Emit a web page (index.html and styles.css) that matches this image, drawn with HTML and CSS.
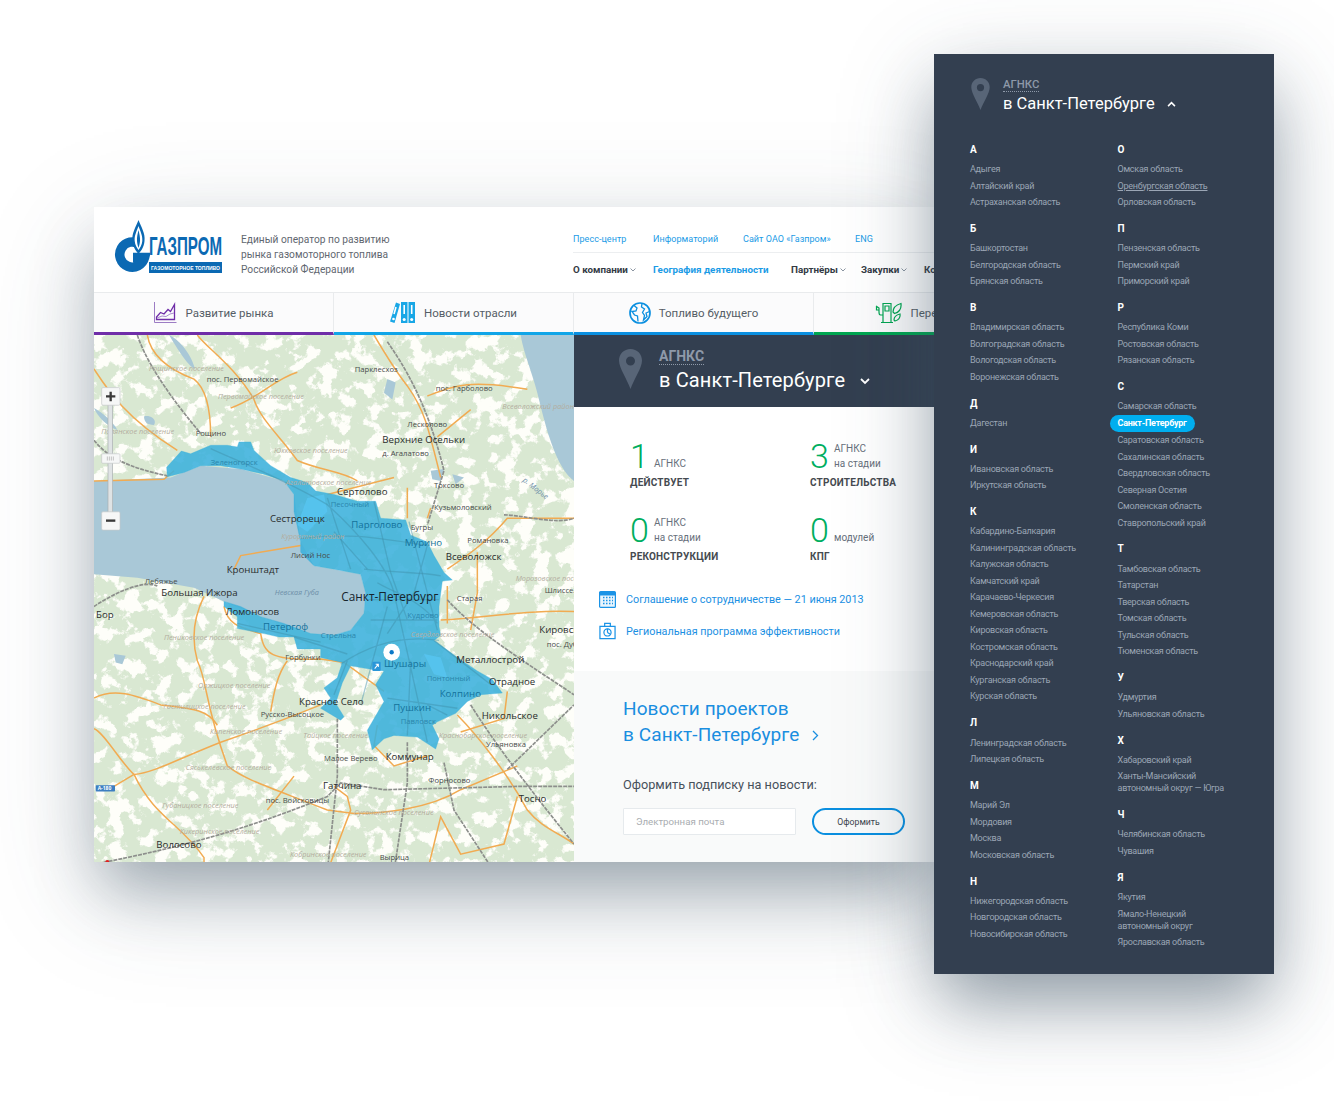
FILE: index.html
```html
<!DOCTYPE html>
<html lang="ru">
<head>
<meta charset="utf-8">
<title>АГНКС в Санкт-Петербурге</title>
<link rel="stylesheet" href="styles.css">
</head>
<body>
<div class="stage">
  <main class="card">
    <header class="site-head">
      <a class="logo" href="#">
        <svg width="110" height="56" viewBox="0 0 110 56">
          <path d="M26 25.5A12.6 12.6 0 1 0 30.6 38.500H19" fill="none" stroke="#0b69b3" stroke-width="9.500"/>
          <path d="M24.500 1C27 8 31.500 14 30.500 22C30 28 27 32 24.500 35C22 32 19 28 18.500 22C17.500 14 22 8 24.500 1Z" fill="#0b69b3"/>
          <path d="M24.500 7C26 12 28.800 16 28.300 22C28 26 26 29 24.500 31C23 29 21 26 20.700 22C20.200 16 23 12 24.500 7Z" fill="#fff"/>
          <path d="M24.500 11C25.300 15 26.300 18 26 22C25.800 25 25 27 24.500 29C24 27 23.200 25 23 22C22.700 18 23.700 15 24.500 11Z" fill="#0b69b3"/>
          <text class="logo-name" x="35" y="36" textLength="73" lengthAdjust="spacingAndGlyphs">ГАЗПРОМ</text>
          <rect x="35" y="43" width="73" height="11" fill="#0b69b3"/>
          <text class="logo-sub" x="37" y="51" textLength="69" lengthAdjust="spacingAndGlyphs">ГАЗОМОТОРНОЕ ТОПЛИВО</text>
        </svg>
      </a>
      <p class="tagline">Единый оператор по развитию<br>рынка газомоторного топлива<br>Российской Федерации</p>
      <nav class="site-nav">
        <ul class="nav-top">
          <li class="w80"><a href="#">Пресс-центр</a></li>
          <li class="w90"><a href="#">Информаторий</a></li>
          <li class="w112"><a href="#">Сайт ОАО «Газпром»</a></li>
          <li><a href="#">ENG</a></li>
        </ul>
        <ul class="nav-main">
          <li class="w80">О компании<svg class="caret" width="6" height="4" viewBox="0 0 6 4"><path d="M.5.5 3 3 5.500.5" fill="none" stroke="#8b95a1"/></svg></li>
          <li class="w138 active">География деятельности</li>
          <li class="w70">Партнёры<svg class="caret" width="6" height="4" viewBox="0 0 6 4"><path d="M.5.5 3 3 5.500.5" fill="none" stroke="#8b95a1"/></svg></li>
          <li class="w63">Закупки<svg class="caret" width="6" height="4" viewBox="0 0 6 4"><path d="M.5.5 3 3 5.500.5" fill="none" stroke="#8b95a1"/></svg></li>
          <li>Контакты</li>
        </ul>
      </nav>
    </header>

    <div class="tabs">
      <a class="tab tab-purple" href="#">
        <svg width="24" height="23" viewBox="0 0 24 23" fill="none" stroke="#6f2da8">
          <path d="M1.500 1V21.500H23.500" stroke="#9c7cc4"/>
          <path d="M3.500 18.500V16L7.500 11.500 11 13 15 8.500 17.500 10.500 21.500 3.500V18.500Z" stroke-width="1.300"/>
          <path d="M4 17 9 15 13 15.500 17 13 21 12" stroke="#a98ad0"/>
        </svg>
        <span>Развитие рынка</span>
      </a>
      <a class="tab tab-sky" href="#">
        <svg width="26" height="23" viewBox="0 0 26 23">
          <path d="M6 1.500 10 3 4.500 22 0 20.500Z" fill="#19a7e6"/>
          <rect x="11" y="1" width="6.500" height="21" fill="#19a7e6"/>
          <rect x="18.500" y="1" width="6.500" height="21" fill="#19a7e6"/>
          <path d="M6 6 4 13M14.200 4V13M21.700 4V13" stroke="#fff" stroke-width="1.600"/>
          <circle cx="3.500" cy="18" r="1.300" fill="#fff"/><circle cx="14.200" cy="18.500" r="1.500" fill="#fff"/><circle cx="21.700" cy="18.500" r="1.500" fill="#fff"/>
        </svg>
        <span>Новости отрасли</span>
      </a>
      <a class="tab tab-blue" href="#">
        <svg width="22" height="22" viewBox="0 0 22 22" fill="none" stroke="#0a8fe0" stroke-width="1.300">
          <circle cx="11" cy="11" r="10" stroke-width="1.700"/>
          <path d="M5 3.500 8 6 7 9 3 9.500 5.500 13 8.500 14 9 19.500M13 1.500 12.500 5 15.500 7 13.500 10.500 15.500 13.500 14.500 18 18 14.500 17 11 20.500 9.500"/>
        </svg>
        <span>Топливо будущего</span>
      </a>
      <a class="tab tab-green" href="#">
        <svg width="27" height="21" viewBox="0 0 27 21" fill="none" stroke="#00a651" stroke-width="1.200">
          <path d="M8 20.500V1.500H16V20.500M6 20.500H18M10 4H14V9H10Z"/>
          <path d="M8 13H5.500C4 13 4 11 4 10V6L1 4M4 8H1.500V5"/>
          <path d="M18 10C18 6 21 3 26 1.500C26.500 6 25 10 19.500 11.500ZM19 18C19 15 21 13 25 12C25.500 15.500 24 18 20 19Z"/>
        </svg>
        <span>Переход на газ</span>
      </a>
    </div>

    <div class="body-row">
      <figure class="map">
        <svg width="480" height="527" viewBox="0 0 1440 1553" preserveAspectRatio="none">
          <defs>
            <filter id="patches" x="0" y="0" width="100%" height="100%">
              <feTurbulence type="fractalNoise" baseFrequency="0.022" numOctaves="6" seed="11"/>
              <feColorMatrix type="matrix" values="0 0 0 0 .99  0 0 0 0 .99  0 0 0 0 .95  12 0 0 0 -6.200"/>
            </filter>
          </defs>
          <rect class="land" width="1440" height="1581"/>
          <rect class="clearings" width="1440" height="1581" filter="url(#patches)"/>
          <path class="water" d="M1280 0H1440V430C1400 400 1370 330 1340 210 1320 120 1290 60 1280 0ZM225 0C250 10 290 50 303 100 280 90 250 40 225 0ZM0 215C30 230 60 260 70 280 40 270 10 240 0 215ZM150 240C170 235 190 250 180 265 160 265 150 255 150 240ZM880 130 905 140 895 190 870 170ZM1010 400 1050 395 1040 430 1015 425ZM1075 410 1110 420 1085 440ZM60 940 95 945 85 970 65 965Z"/>
          <path class="water" d="M0 430 230 420 320 385 440 395 570 430 600 470 620 610 660 680 800 705 815 760 810 820 770 870 720 885 650 880 500 830 390 785 300 745 130 715 0 705Z"/>
          <g class="roads">
            <path d="M160 0C170 60 220 100 300 130 340 160 350 230 350 300"/>
            <path d="M310 0C340 40 420 90 480 190 500 250 560 300 610 370 680 400 740 400 790 430"/>
            <path d="M610 110C540 130 490 190 410 215"/>
            <path d="M840 0C870 50 900 100 940 150 990 220 1000 260 1040 420"/>
            <path d="M1000 180C1080 150 1120 130 1300 160"/>
            <path d="M1130 220 1030 300"/>
            <path d="M0 430 210 425 240 400"/>
            <path d="M420 690 440 650 620 620"/>
            <path d="M940 450V540M1010 510 1000 540"/>
            <path d="M1060 690C1120 650 1180 610 1240 540H1440"/>
            <path d="M1150 640V760L1130 870"/>
            <path d="M1040 840C1200 830 1300 810 1440 815M1060 740V850"/>
            <path d="M390 800C400 850 430 860 500 880 510 940 530 960 680 955L750 965 870 1050"/>
            <path d="M330 770C300 830 290 890 310 960 340 1020 330 1080 400 1270 450 1310 520 1330 700 1400L780 1410C860 1410 1000 1400 1100 1340L1270 1270"/>
            <path d="M0 1070C60 1040 120 1060 200 1090 280 1100 340 1100 370 1150"/>
            <path d="M120 1295C180 1290 250 1250 380 1200 500 1160 580 1130 680 1090"/>
            <path d="M0 1160C30 1170 80 1260 120 1295 180 1420 260 1440 330 1540V1581"/>
            <path d="M60 1330 120 1295"/>
            <path d="M1090 1120C1150 1180 1240 1290 1300 1400 1340 1450 1400 1470 1440 1500"/>
            <path d="M1270 1360 1230 1500 1100 1530 1040 1420 1000 1581"/>
            <path d="M530 1110C540 1050 550 1000 580 960"/>
            <path d="M720 1330 760 1360 770 1400 700 1581"/>
            <path d="M850 1150 840 1210 900 1270 1000 1240"/>
            <path d="M0 100C40 160 90 240 250 340M900 420 700 470M1240 1050 1230 1130 1100 1170M600 1300 520 1400"/>
          </g>
          <g class="rails">
            <path d="M130 0C150 60 200 150 320 290"/>
            <path d="M0 310C40 360 100 390 220 415"/>
            <path d="M880 20C930 90 1000 200 1050 400L1000 560"/>
            <path d="M0 800C60 760 150 720 190 740"/>
            <path d="M1060 780C1130 860 1270 950 1440 1060"/>
            <path d="M1240 1280 1440 1090"/>
            <path d="M1130 1090C1200 1200 1300 1330 1440 1500"/>
            <path d="M0 1560C200 1520 400 1480 700 1360L740 1320 870 1340 1280 1330H1440"/>
            <path d="M940 1200V1320L900 1581"/>
            <path d="M730 1130V1300L700 1581"/>
            <path d="M1050 1260 1080 1400 1200 1581"/>
            <path d="M1230 530C1280 530 1390 560 1440 540"/>
          </g>
          <path class="zone" d="M218 390 262 342 290 350 350 325 400 325 430 330 435 315 470 315 480 340 530 385 590 420 640 435 665 460 720 470 790 490 845 490 860 540 935 545 950 590 1000 610 1020 650 1050 700 1075 722 1045 725 1035 800 1035 860 1040 885 1020 900 1090 950 1150 990 1195 1015 1225 1055 1160 1060 1120 1080 1085 1115 1030 1140 1015 1150 1035 1190 1025 1220 970 1185 900 1180 870 1190 835 1222 820 1165 870 1080 845 1030 870 990 830 985 770 975 745 1025 725 1085 750 1125 740 1135 680 1100 710 1070 690 1040 730 1010 745 965 680 950 680 925 610 925 600 890 555 890 510 880 430 865 430 830 390 800 390 785 440 800 500 830 570 850 650 880 720 885 770 870 810 820 815 760 800 705 720 690 660 680 620 640 620 610 600 520 600 470 570 430 510 410 440 395 380 385 320 385 270 405 220 418Z"/>
          <path class="zone-light" d="M640 480 690 470 700 520 640 580 610 560ZM990 940 1040 950 1060 1010 1020 1000Z"/>
          <g class="streets">
            <path d="M350 335C450 380 560 420 700 500 790 580 880 680 900 760M810 690C900 700 1000 700 1040 710M820 780H1035M1035 900C900 880 800 930 740 970M900 760 1000 1200M880 800 800 1090M1020 900 1190 1030M620 600C760 580 860 600 1000 620M600 890 760 940M880 1070 1090 1100M950 960 940 1180M700 480 770 690"/>
            <path d="M840 490 890 700 940 840M1000 620 960 760 880 880M830 840H1030M850 730C900 760 980 780 1030 850M945 550 1000 760 1030 870M720 580 820 690M430 850 680 905M1000 1090 1060 1120M760 960 720 1060"/>
          </g>
          <g class="districts">
            <text x="165" y="107">Рощинское поселение</text>
            <text x="372" y="190">Первомайское поселение</text>
            <text x="22" y="292">Полянское поселение</text>
            <text x="540" y="347">Юкковское поселение</text>
            <text x="575" y="441">Агалатовское поселение</text>
            <text x="1225" y="218">Всеволожский район</text>
            <text x="562" y="601">Курортный район</text>
            <text x="1265" y="726">Морозовское поселение</text>
            <text x="210" y="900">Пениковское поселение</text>
            <text x="950" y="890">Свердловское поселение</text>
            <text x="312" y="1040">Оржицкое поселение</text>
            <text x="208" y="1101">Гостилицкое поселение</text>
            <text x="348" y="1176">Кипенское поселение</text>
            <text x="628" y="1187">Тайцкое поселение</text>
            <text x="1035" y="1187">Красноборское поселение</text>
            <text x="275" y="1283">Сяськелевское поселение</text>
            <text x="205" y="1393">Губаницкое поселение</text>
            <text x="780" y="1415">Сусанинское поселение</text>
            <text x="257" y="1470">Кикеринское поселение</text>
            <text x="588" y="1539">Кобринское поселение</text>
          </g>
          <g class="waters">
            <text x="542" y="765">Невская Губа</text>
            <text x="1285" y="430" transform="rotate(38 1285 430)">р. Морье</text>
          </g>
          <g class="small">
            <text x="782" y="110">Парклесхоз</text>
            <text x="338" y="140">пос. Первомайское</text>
            <text x="1025" y="165">пос. Гарболово</text>
            <text x="305" y="299">Рощино</text>
            <text x="940" y="270">Лесколово</text>
            <text x="865" y="357">д. Агалатово</text>
            <text x="1020" y="450">Токсово</text>
            <text x="1020" y="516">Кузьмоловский</text>
            <text x="950" y="575">Бугры</text>
            <text x="1120" y="612">Романовка</text>
            <text x="152" y="733">Лебяжье</text>
            <text x="590" y="656">Лисий Нос</text>
            <text x="1088" y="783">Старая</text>
            <text x="574" y="958">Горбунки</text>
            <text x="500" y="1126">Русско-Высоцкое</text>
            <text x="690" y="1254">Малое Верево</text>
            <text x="1176" y="1215">Ульяновка</text>
            <text x="1003" y="1320">Форносово</text>
            <text x="515" y="1380">пос. Войсковицы</text>
            <text x="857" y="1548">Вырица</text>
            <text x="1352" y="760">Шлиссельбург</text>
            <text x="1358" y="920">пос. Дубровка</text>
          </g>
          <g class="small small-in">
            <text x="350" y="384">Зеленогорск</text>
            <text x="710" y="507">Песочный</text>
            <text x="940" y="833">Кудрово</text>
            <text x="680" y="892">Стрельна</text>
            <text x="998" y="1020">Понтонный</text>
            <text x="920" y="1147">Павловск</text>
          </g>
          <g class="towns">
            <text x="865" y="317">Верхние Осельки</text>
            <text x="729" y="471">Сертолово</text>
            <text x="528" y="550">Сестрорецк</text>
            <text x="1055" y="662">Всеволожск</text>
            <text x="398" y="700">Кронштадт</text>
            <text x="202" y="770">Большая Ижора</text>
            <text x="395" y="824">Ломоносов</text>
            <text x="1087" y="967">Металлострой</text>
            <text x="1185" y="1030">Отрадное</text>
            <text x="615" y="1089">Красное Село</text>
            <text x="1163" y="1131">Никольское</text>
            <text x="875" y="1253">Коммунар</text>
            <text x="687" y="1337">Гатчина</text>
            <text x="1274" y="1375">Тосно</text>
            <text x="187" y="1511">Волосово</text>
            <text x="1336" y="877">Кировск</text>
            <text x="6" y="833">Бор</text>
            <text class="capital" x="742" y="783">Санкт-Петербург</text>
          </g>
          <g class="towns towns-in">
            <text x="772" y="568">Парголово</text>
            <text x="932" y="622">Мурино</text>
            <text x="507" y="868">Петергоф</text>
            <text x="870" y="977">Шушары</text>
            <text x="1037" y="1067">Колпино</text>
            <text x="898" y="1107">Пушкин</text>
          </g>
          <rect x="835" y="963" width="25" height="27" rx="3" fill="#2a96d8"/>
          <path d="M842 983 853 970M845 970H853V978" fill="none" stroke="#fff" stroke-width="3"/>
          <rect x="5" y="1327" width="58" height="18" rx="2" fill="#3d7fc2"/>
          <text class="road-no" x="11" y="1342">А-180</text>
          <circle cx="893" cy="935" r="25" fill="#fff"/>
          <circle cx="893" cy="935" r="6.500" fill="#0a78c8"/>
          <g class="zoomer">
            <rect class="track" x="42" y="205" width="14" height="320"/>
            <rect class="ctl" x="23" y="155" width="55" height="52" rx="4"/>
            <path d="M36 181H64M50 167V195" stroke="#3a3a3a" stroke-width="7"/>
            <rect class="ctl" x="23" y="350" width="55" height="28" rx="3"/>
            <path d="M40 358V370M46 358V370M52 358V370M58 358V370" stroke="#aaa" stroke-width="2"/>
            <rect class="ctl" x="23" y="521" width="55" height="54" rx="4"/>
            <path d="M36 547H64" stroke="#3a3a3a" stroke-width="7"/>
          </g>
          <circle cx="40" cy="1553" r="6" fill="#e02020"/>
        </svg>
      </figure>

      <section class="side">
        <div class="region-bar">
          <svg width="23" height="40" viewBox="0 0 23 40"><path fill-rule="evenodd" d="M11.500 0C18 0 23 5 23 11.500 23 19 15 30 11.500 40 8 30 0 19 0 11.500 0 5 5 0 11.500 0ZM11.500 7.500A4.500 4.500 0 1 0 11.500 16.500 4.500 4.500 0 1 0 11.500 7.500Z" fill="#586577"/></svg>
          <div class="region-text">
            <span class="kind">АГНКС</span>
            <h1>в Санкт-Петербурге<svg class="chev" width="10" height="7" viewBox="0 0 10 7"><path d="M1 1 5 5 9 1" fill="none" stroke="#fff" stroke-width="1.800"/></svg></h1>
          </div>
        </div>

        <div class="stats">
          <div class="stat"><b class="num">1</b><span class="lab">АГНКС</span><strong class="cap">ДЕЙСТВУЕТ</strong></div>
          <div class="stat"><b class="num">3</b><span class="lab">АГНКС<br>на стадии</span><strong class="cap">СТРОИТЕЛЬСТВА</strong></div>
          <div class="stat"><b class="num">0</b><span class="lab">АГНКС<br>на стадии</span><strong class="cap">РЕКОНСТРУКЦИИ</strong></div>
          <div class="stat"><b class="num">0</b><span class="lab">модулей</span><strong class="cap">КПГ</strong></div>
        </div>

        <ul class="docs">
          <li>
            <svg width="17" height="18" viewBox="0 0 17 18"><rect x=".6" y="1.600" width="15.800" height="15.800" rx="1" fill="#e9f5fd" stroke="#1a93e6" stroke-width="1.200"/><path d="M1 2H16V5.500H1Z" fill="#1a93e6"/><path d="M4 7.500H14M4 10.500H14M4 13.500H14" stroke="#1a93e6" stroke-width="1.500" stroke-dasharray="1.500 1.500"/></svg>
            <a href="#">Соглашение о сотрудничестве — 21 июня 2013</a>
          </li>
          <li>
            <svg width="17" height="18" viewBox="0 0 18 18" fill="none" stroke="#1a93e6" stroke-width="1.300"><path d="M1 4H17V17H1Z"/><path d="M6 4V1H12V4"/><circle cx="9" cy="10.500" r="3.800"/><path d="M9 10.500V6.700M9 10.500 12 12.500" /></svg>
            <a href="#">Региональная программа эффективности</a>
          </li>
        </ul>

        <div class="news">
          <h2>Новости проектов<br>в Санкт-Петербурге<svg class="chev2" width="7" height="11" viewBox="0 0 7 11"><path d="M1 1 5.500 5.500 1 10" fill="none" stroke="#1a8ee0" stroke-width="1.300"/></svg></h2>
          <p class="sub-label">Оформить подписку на новости:</p>
          <form class="sub-form">
            <input class="email" type="text" placeholder="Электронная почта">
            <button class="send" type="button">Оформить</button>
          </form>
        </div>
      </section>
    </div>
  </main>

  <aside class="panel">
    <div class="panel-head">
      <svg width="19" height="32" viewBox="0 0 23 40"><path fill-rule="evenodd" d="M11.500 0C18 0 23 5 23 11.500 23 19 15 30 11.500 40 8 30 0 19 0 11.500 0 5 5 0 11.500 0ZM11.500 7.500A4.500 4.500 0 1 0 11.500 16.500 4.500 4.500 0 1 0 11.500 7.500Z" fill="#586577"/></svg>
      <div class="region-text">
        <span class="kind kind-sm">АГНКС</span>
        <h2 class="panel-title">в Санкт-Петербурге<svg class="chev" width="9" height="6" viewBox="0 0 10 7"><path d="M1 6 5 2 9 6" fill="none" stroke="#fff" stroke-width="1.800"/></svg></h2>
      </div>
    </div>
    <div class="regions">
      <div class="col">
        <section class="letter"><h4>А</h4><ul><li>Адыгея</li><li>Алтайский край</li><li>Астраханская область</li></ul></section>
        <section class="letter"><h4>Б</h4><ul><li>Башкортостан</li><li>Белгородская область</li><li>Брянская область</li></ul></section>
        <section class="letter"><h4>В</h4><ul><li>Владимирская область</li><li>Волгоградская область</li><li>Вологодская область</li><li>Воронежская область</li></ul></section>
        <section class="letter"><h4>Д</h4><ul><li>Дагестан</li></ul></section>
        <section class="letter"><h4>И</h4><ul><li>Ивановская область</li><li>Иркутская область</li></ul></section>
        <section class="letter"><h4>К</h4><ul><li>Кабардино-Балкария</li><li>Калининградская область</li><li>Калужская область</li><li>Камчатский край</li><li>Карачаево-Черкесия</li><li>Кемеровская область</li><li>Кировская область</li><li>Костромская область</li><li>Краснодарский край</li><li>Курганская область</li><li>Курская область</li></ul></section>
        <section class="letter"><h4>Л</h4><ul><li>Ленинградская область</li><li>Липецкая область</li></ul></section>
        <section class="letter"><h4>М</h4><ul><li>Марий Эл</li><li>Мордовия</li><li>Москва</li><li>Московская область</li></ul></section>
        <section class="letter"><h4>Н</h4><ul><li>Нижегородская область</li><li>Новгородская область</li><li>Новосибирская область</li></ul></section>
      </div>
      <div class="col">
        <section class="letter"><h4>О</h4><ul><li>Омская область</li><li class="hover">Оренбургская область</li><li>Орловская область</li></ul></section>
        <section class="letter"><h4>П</h4><ul><li>Пензенская область</li><li>Пермский край</li><li>Приморский край</li></ul></section>
        <section class="letter"><h4>Р</h4><ul><li>Республика Коми</li><li>Ростовская область</li><li>Рязанская область</li></ul></section>
        <section class="letter"><h4>С</h4><ul><li>Самарская область</li><li class="current"><span>Санкт-Петербург</span></li><li>Саратовская область</li><li>Сахалинская область</li><li>Свердловская область</li><li>Северная Осетия</li><li>Смоленская область</li><li>Ставропольский край</li></ul></section>
        <section class="letter"><h4>Т</h4><ul><li>Тамбовская область</li><li>Татарстан</li><li>Тверская область</li><li>Томская область</li><li>Тульская область</li><li>Тюменская область</li></ul></section>
        <section class="letter"><h4>У</h4><ul><li>Удмуртия</li><li>Ульяновская область</li></ul></section>
        <section class="letter"><h4>Х</h4><ul><li>Хабаровский край</li><li>Ханты-Мансийский<br>автономный округ — Югра</li></ul></section>
        <section class="letter"><h4>Ч</h4><ul><li>Челябинская область</li><li>Чувашия</li></ul></section>
        <section class="letter"><h4>Я</h4><ul><li>Якутия</li><li>Ямало-Ненецкий<br>автономный округ</li><li>Ярославская область</li></ul></section>
      </div>
    </div>
  </aside>
</div>
</body>
</html>
```

FILE: styles.css
```css
* { box-sizing: border-box; }
html, body { margin: 0; padding: 0; background: #fff; }
body { width: 1334px; height: 1108px; overflow: hidden; font-family: Roboto, "Noto Sans", sans-serif; }
ul { list-style: none; margin: 0; padding: 0; }
a { color: inherit; text-decoration: none; }
h1, h2, h4, p, figure { margin: 0; font-weight: 400; }

.stage { display: flex; align-items: flex-start; padding: 54px 0 0 94px; }

.card {
  width: 840px; height: 655px; margin-top: 153px; background: #fff; overflow: hidden; flex: none;
  box-shadow: 0 34px 60px -8px rgba(58, 78, 96, .42), 0 30px 110px rgba(58, 78, 96, .18);
}
.panel {
  position: relative; z-index: 2; width: 340px; height: 920px; flex: none; background: #333f50; padding: 24px 0 0 36px;
  box-shadow: 0 34px 60px -8px rgba(58, 78, 96, .42), 0 24px 90px rgba(58, 78, 96, .26);
}

/* header */
.site-head { height: 86px; display: flex; align-items: flex-start; border-bottom: 1px solid #e9ebed; }
.logo { margin: 12px 0 0 20px; width: 110px; height: 56px; flex: none; display: block; }
.logo svg { display: block; }
.logo-name { font: 700 26px "Liberation Sans", sans-serif; fill: #0b69b3; }
.logo-sub { font: 700 6px "Liberation Sans", sans-serif; fill: #fff; }
.tagline { margin: 25px 0 0 17px; width: 332px; flex: none; font-size: 10.2px; line-height: 15px; color: #5f6770; }
.site-nav { flex: none; width: 420px; }
.nav-top, .nav-main { display: flex; white-space: nowrap; }
.nav-top { margin-top: 27px; height: 19px; font-size: 9px; color: #1a9be6; border-bottom: 1px solid #eceef0; letter-spacing: .05px; }
.nav-main { margin-top: 11px; font-size: 9.8px; font-weight: 700; color: #333a44; }
.nav-main .active { color: #1a9be6; }
.caret { margin-left: 2px; vertical-align: 1px; }
.w80 { width: 80px; } .w90 { width: 90px; } .w112 { width: 112px; } .w138 { width: 138px; } .w70 { width: 70px; } .w63 { width: 63px; }

/* tabs */
.tabs { display: flex; height: 42px; }
.tab {
  flex: none; width: 240px; height: 42px; display: flex; align-items: center; justify-content: center; gap: 8px;
  background: #fbfbfc; border-right: 1px solid #e9ebed; border-bottom: 3px solid;
  font-size: 11.5px; color: #555d66;
}
.tab-purple { border-bottom-color: #6f2da8; }
.tab-sky { border-bottom-color: #10a5e8; }
.tab-blue { border-bottom-color: #0a8fe0; }
.tab-green { border-bottom-color: #00a651; }

.body-row { display: flex; height: 527px; }

/* map */
.map { width: 480px; height: 527px; flex: none; overflow: hidden; }
.map svg { display: block; }
.land { fill: #d9e8d2; }
.water { fill: #a9c8d7; }
.roads path { fill: none; stroke: #f1ab52; stroke-width: 4.500; }
.rails path { fill: none; stroke: #8d8f8c; stroke-width: 5; stroke-dasharray: 12 3; }
.zone { fill: #3bb0dc; fill-opacity: .88; stroke: #3bb0dc; stroke-width: 1; }
.zone-light { fill: #58c8f5; fill-opacity: .7; }
.streets path { fill: none; stroke: #3f8fa8; stroke-width: 4; stroke-opacity: .45; }
.map text { font-family: "Open Sans", "Noto Sans", sans-serif; }
.districts text { font-size: 22px; font-style: italic; fill: #b3ad9e; }
.waters text { font-size: 22px; font-style: italic; fill: #6e8fa8; }
.small text { font-size: 23px; fill: #484c4a; }
.small-in text { fill: #2b86ac; }
.towns text { font-size: 29px; fill: #2a2d2c; }
.towns-in text { fill: #14729c; }
.towns .capital { font-size: 35.500px; fill: #16242c; }
.road-no { font-size: 15px; font-weight: 700; fill: #fff; }
.track { fill: #dfe3e4; stroke: #a9aeb0; stroke-width: 2; }
.ctl { fill: #f6f7f7; stroke: #c5c8ca; stroke-width: 2; }

/* side */
.side { width: 360px; flex: none; display: flex; flex-direction: column; }
.region-bar { height: 72px; flex: none; background: #333f50; display: flex; align-items: flex-start; padding: 14px 0 0 45px; gap: 17px; }
.region-text { display: flex; flex-direction: column; align-items: flex-start; }
.kind { font-size: 14px; font-weight: 700; line-height: 15px; color: #8e99a9; border-bottom: 1px dotted #8e99a9; }
.region-bar h1 { margin-top: 3px; font-size: 20px; line-height: 24px; color: #fff; white-space: nowrap; letter-spacing: .13px; }
.region-bar .chev { margin-left: 15px; }
.chev { margin-left: 12px; vertical-align: 2px; }

.stats { display: grid; grid-template-columns: 180px 180px; row-gap: 25px; padding: 34px 0 0 56px; }
.stat { display: grid; grid-template-columns: 24px 1fr; grid-template-rows: 30px 14px; row-gap: 5px; }
.num { font-size: 34px; line-height: 30px; font-weight: 300; color: #00ae5f; }
.lab { align-self: end; font-size: 10px; line-height: 14.500px; color: #67707b; }
.cap { grid-column: 1 / 3; font-size: 10px; line-height: 14px; font-weight: 700; color: #454a50; letter-spacing: .2px; }

.docs { margin: 25px 0 30px 25px; display: flex; flex-direction: column; gap: 12px; font-size: 10.8px; color: #1a8fe3; }
.docs li { display: flex; align-items: center; gap: 10px; height: 20px; white-space: nowrap; }

.news { flex: 1; background: #f9fafa; padding: 25px 0 0 49px; }
.news h2 { font-size: 19px; line-height: 26px; color: #1a8ee0; white-space: nowrap; letter-spacing: .1px; }
.chev2 { margin-left: 13px; }
.sub-label { margin-top: 28px; font-size: 12.700px; line-height: 18px; color: #47505a; }
.sub-form { display: flex; gap: 16px; margin-top: 14px; }
.email { width: 173px; height: 27px; padding: 0 12px; border: 1px solid #e6eaed; background: #fff; font: 9.700px Roboto, sans-serif; border-radius: 1px; outline: 0; }
.email::placeholder { color: #a9adb1; opacity: 1; }
.send { width: 93px; height: 27px; padding: 0; border: 2px solid #0a8fe0; border-radius: 14px; background: transparent; font: 8.700px Roboto, sans-serif; color: #3c444d; }

/* panel */
.panel-head { display: flex; gap: 13px; align-items: flex-start; padding-left: 1px; }
.kind-sm { font-size: 11.300px; line-height: 13px; font-weight: 500; }
.panel-title { margin-top: 0; font-size: 16.500px; line-height: 23px; color: #fff; white-space: nowrap; }
.regions { display: grid; grid-template-columns: 147.500px 1fr; margin-top: 26.750px; }
.letter + .letter { margin-top: 10.600px; }
.letter h4 { font-size: 10px; line-height: 16.500px; font-weight: 700; color: #fff; margin-bottom: 2.500px; }
.letter li { padding: 2.250px 0; font-size: 9px; letter-spacing: -.25px; line-height: 12px; color: #9ba6b5; white-space: nowrap; }
.letter .hover { text-decoration: underline; }
.letter .current span { display: inline-block; margin: -2.250px 0 -2.250px -8px; padding: 0 8px; height: 17px; line-height: 17px; border-radius: 9px; background: #00aeef; color: #fff; font-weight: 700; }
```
